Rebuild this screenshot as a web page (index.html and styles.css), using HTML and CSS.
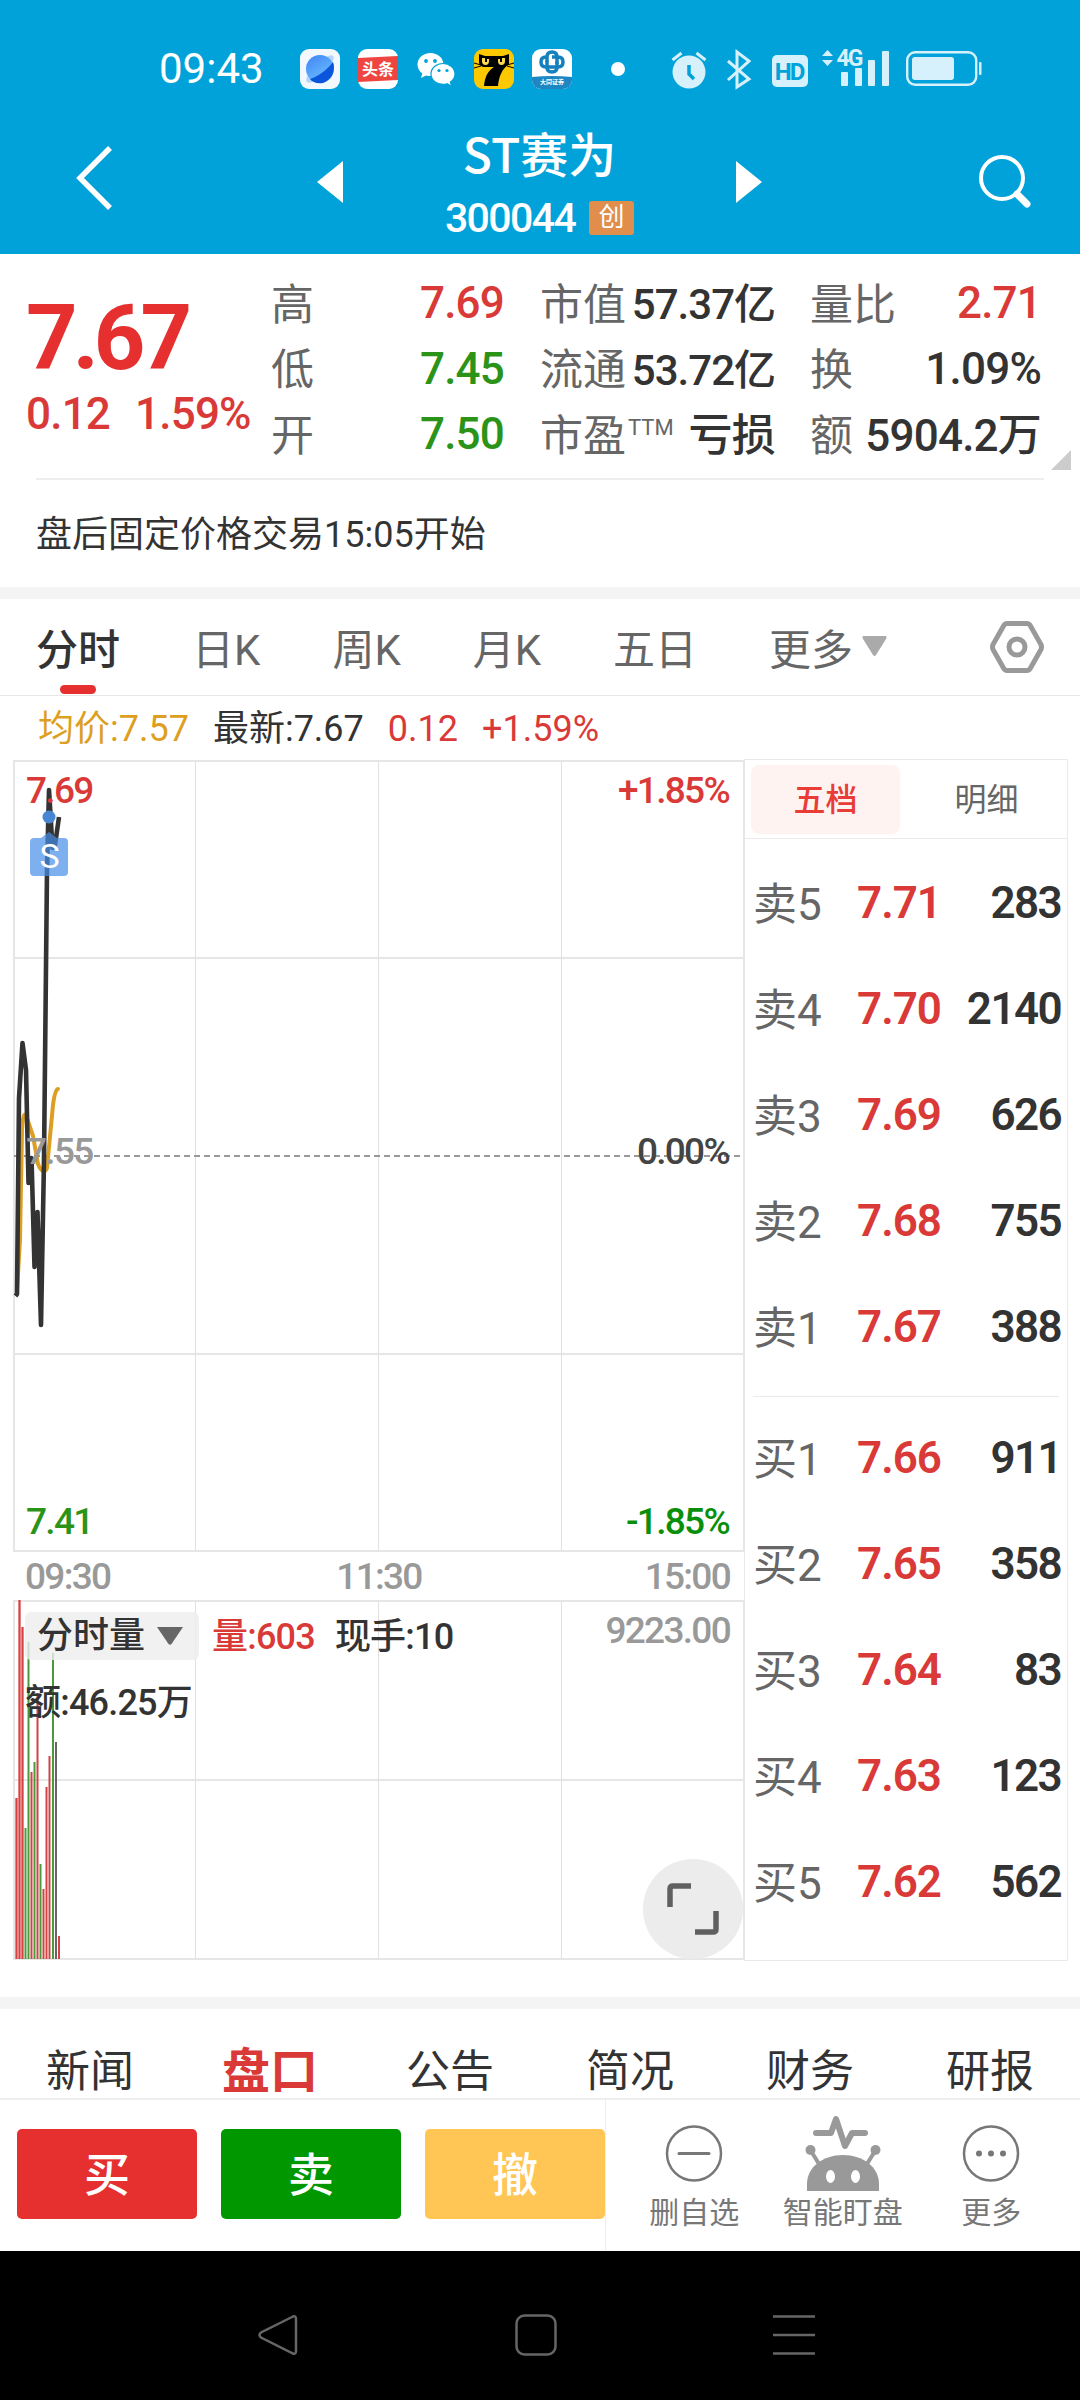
FILE: index.html
```html
<!DOCTYPE html>
<html lang="zh-CN">
<head>
    <meta charset="UTF-8">
    <meta name="viewport" content="width=device-width, initial-scale=1.0">
    <title>ST赛为 300044</title>
    <link rel="stylesheet" href="styles.css">
</head>
<body>

    <!-- 顶部 -->
    <header class="top">
        <div class="status-bar">
            <span class="clock">09:43</span>
            <svg class="status-icons" width="800" height="60" viewBox="280 40 800 60">
                <defs>
                    <linearGradient id="planet" x1="0" y1="0" x2="0.6" y2="1">
                        <stop offset="0" stop-color="#3f83f6"/>
                        <stop offset="1" stop-color="#6cc0ff"/>
                    </linearGradient>
                </defs>
                <!-- 浏览器 -->
                <rect x="300" y="49" width="40" height="40" rx="9" fill="#f3f8fe"/>
                <ellipse cx="320" cy="69" rx="18.500" ry="6" transform="rotate(-45 320 69)" fill="#b5d6fb"/>
                <circle cx="320" cy="69" r="14" fill="url(#planet)"/>
                <path d="M310 79C319 76 329 68 333 62C336 70 332 80 323 83C317 84 312 82 310 79z" fill="#0b55dc"/>
                <!-- 头条 -->
                <rect x="358" y="49" width="40" height="40" rx="9" fill="#fff"/>
                <path d="M358 58L398 56V80L358 82z" fill="#ef4540"/>
                <text class="toutiao" x="378" y="75">头条</text>
                <!-- 微信 -->
                <path d="M430.500 53c-7.300 0-13 5-13 11.500 0 3.700 1.900 6.800 4.800 8.900l-1.300 4.600 5-2.600c1.600.4 3 .6 4.500.6 7.300 0 13-5.200 13-11.500S437.800 53 430.500 53z" fill="#fff"/>
                <path d="M443 63.500c-6.600 0-12 4.400-12 10.400s5.400 10.400 12 10.400c1.500 0 2.800-.2 4-.6l4.600 2.500-1.200-4.200c2.800-2 4.600-4.800 4.600-8.100 0-6-5.400-10.400-12-10.400z" fill="#fff" stroke="#01a2d9" stroke-width="1.200"/>
                <g fill="#01a2d9"><circle cx="426" cy="61" r="1.900"/><circle cx="435" cy="61" r="1.900"/><circle cx="439" cy="70.500" r="1.600"/><circle cx="447" cy="70.500" r="1.600"/></g>
                <!-- 七猫 -->
                <rect x="474" y="49" width="40" height="40" rx="9" fill="#fcc800"/>
                <path d="M479 54l6 2h18l6-2v10c-7 5-10 12-11 22h-14c1-10 4-15 10-19h-11c-3-1-4-3-4-5z" fill="#000"/>
                <path d="M482 58v3q0 4 3.500 4t3.500-4v-2h-2v3h-2v-4zM498 59v2q0 4 3.500 4t3.500-4v-3l-3 0v4h-2v-3z" fill="#fcd94a"/>
                <path d="M474 63l7 2M474 68l7-2M514 63l-7 2M514 68l-7-2" stroke="#000" stroke-width="1"/>
                <!-- 大同证券 -->
                <rect x="532" y="49" width="40" height="40" rx="9" fill="#fff"/>
                <path d="M532 77q20-2 40 0v3a9 9 0 0 1-9 9h-22a9 9 0 0 1-9-9z" fill="#1f86c4"/>
                <g fill="none" stroke="#1480bd" stroke-width="3.500">
                    <path d="M547 62v-5q0-5 5-5t5 5v7"/>
                    <path d="M552 57h6q5 0 5 5t-5 5h-6"/>
                    <path d="M557 62v5q0 5-5 5t-5-5v-6"/>
                    <path d="M552 67h-6q-5 0-5-5t5-5h2"/>
                </g>
                <text class="broker" x="552" y="84">大同证券</text>
                <circle cx="618" cy="69" r="7" fill="#fff"/>
                <!-- 闹钟 -->
                <g fill="#d6f1fb" stroke="#d6f1fb">
                    <circle cx="689" cy="72" r="16.500" stroke="none"/>
                    <path d="M672.500 60l9-7M705.500 60l-9-7" stroke-width="3"/>
                    <path d="M689 65v9l5 5" fill="none" stroke="#01a2d9" stroke-width="3.500"/>
                </g>
                <path d="M728 61l21 18-12 8V52l12 9-21 19" fill="none" stroke="#d6f1fb" stroke-width="3"/>
                <rect x="772" y="55" width="36" height="32" rx="5" fill="#d6f1fb"/>
                <text class="hd" x="789" y="80">HD</text>
                <g fill="#d6f1fb">
                    <path d="M822 56l5.500-6 5.500 6zM822 60h11l-5.500 6z"/>
                    <text class="net" x="836.500" y="66">4G</text>
                    <rect x="841" y="72" width="7" height="14" rx="1"/>
                    <rect x="855" y="68" width="7" height="18" rx="1"/>
                    <rect x="868" y="60" width="7" height="26" rx="1"/>
                    <rect x="882" y="51" width="7" height="35" rx="1"/>
                    <rect x="912" y="57" width="42" height="23" rx="3"/>
                    <rect x="979" y="62" width="2.500" height="13" rx="1"/>
                </g>
                <rect x="907.200" y="52.200" width="69" height="32.600" rx="8" fill="none" stroke="#d6f1fb" stroke-width="2.400"/>
            </svg>
        </div>
        <div class="title-bar">
            <svg class="back" width="40" height="68" viewBox="0 0 40 68"><path d="M36 4L6 34L36 64" fill="none" stroke="#fff" stroke-width="5.500"/></svg>
            <svg class="prev" width="26" height="42" viewBox="0 0 26 42"><path d="M26 0V42L0 21z" fill="#fff"/></svg>
            <div class="stock">
                <h1>ST赛为</h1>
                <p><span class="code">300044</span><span class="board">创</span></p>
            </div>
            <svg class="next" width="26" height="42" viewBox="0 0 26 42"><path d="M0 0V42L26 21z" fill="#fff"/></svg>
            <svg class="search" width="56" height="58" viewBox="0 0 56 58"><circle cx="25" cy="25" r="21" fill="none" stroke="#fff" stroke-width="4"/><path d="M40 41L50 51" stroke="#fff" stroke-width="7" stroke-linecap="round"/></svg>
        </div>
    </header>

    <!-- 行情 -->
    <section class="quote">
        <div class="price">
            <strong>7.67</strong>
            <p><span>0.12</span><span>1.59%</span></p>
        </div>
        <dl class="col col-a">
            <div><dt>高</dt><dd class="up">7.69</dd></div>
            <div><dt>低</dt><dd class="down">7.45</dd></div>
            <div><dt>开</dt><dd class="down">7.50</dd></div>
        </dl>
        <dl class="col col-b">
            <div><dt>市值</dt><dd class="cn tight">57.37亿</dd></div>
            <div><dt>流通</dt><dd class="cn tight">53.72亿</dd></div>
            <div><dt>市盈<sup>TTM</sup></dt><dd class="cn">亏损</dd></div>
        </dl>
        <dl class="col col-c">
            <div><dt>量比</dt><dd class="up">2.71</dd></div>
            <div><dt>换</dt><dd>1.09%</dd></div>
            <div><dt>额</dt><dd class="cn">5904.2万</dd></div>
        </dl>
        <svg class="corner" width="20" height="20" viewBox="0 0 20 20"><path d="M20 0V20H0z" fill="#ccc"/></svg>
    </section>
    <p class="notice">盘后固定价格交易15:05开始</p>

    <!-- 周期 -->
    <nav class="periods">
        <span class="period active">分时</span>
        <span class="period">日K</span>
        <span class="period">周K</span>
        <span class="period">月K</span>
        <span class="period">五日</span>
        <span class="period">更多<svg width="25" height="20" viewBox="0 0 25 20"><path d="M1 0H24Q25 1 24 3L14 19Q12.500 21 11 19L1 3Q0 1 1 0z" fill="#aaa"/></svg></span>
        <svg class="setting" width="54" height="52" viewBox="0 0 54 52"><path d="M17 2.500H37Q39 2.500 40.500 5L51 23.500Q52 26 51 28.500L40.500 47Q39 49.500 37 49.500H17Q15 49.500 13.500 47L3 28.500Q2 26 3 23.500L13.500 5Q15 2.500 17 2.500z" fill="none" stroke="#999" stroke-width="5"/><circle cx="27" cy="26" r="8" fill="none" stroke="#999" stroke-width="5"/></svg>
    </nav>
    <div class="summary">
        <span class="avg">均价:7.57</span>
        <span>最新:7.67</span>
        <span class="up">0.12</span>
        <span class="up">+1.59%</span>
    </div>

    <main class="board-area">
        <div class="charts">
            <svg class="chart" width="732" height="1202" viewBox="13 760 732 1202">
                <g fill="none" stroke="#e6e6e6" stroke-width="2">
                    <path d="M14 761H744V1551H14zM14 958H744M14 1354H744"/>
                    <path d="M14 1601H744V1959H14zM14 1780H744"/>
                </g>
                <path d="M195.500 761V1551M378.500 761V1551M561.500 761V1551M195.500 1601V1959M378.500 1601V1959M561.500 1601V1959" stroke="#e0e0e0" stroke-width="1"/>
                <path d="M14 1156H744" stroke="#999" stroke-width="2" stroke-dasharray="6 4"/>

                <!-- 成交量 -->
                <path d="M15 1959V1798H18V1600H21V1627H24V1959z" fill="#f66" opacity="0.400"/>
                <g stroke="#d24444" stroke-width="2">
                    <path d="M16.500 1959V1798M19.500 1959V1600M22.500 1959V1627M31.500 1959V1772M37.500 1959V1693M43.500 1959V1889M46.500 1959V1787M49.500 1959V1756M59 1959V1936"/>
                </g>
                <g stroke="#4a9a3c" stroke-width="2">
                    <path d="M25.500 1959V1828M28.500 1959V1642M34.500 1959V1762M40.500 1959V1864M53 1959V1653"/>
                </g>
                <path d="M56 1959V1742" stroke="#666" stroke-width="2"/>

                <!-- 均价与价格 -->
                <path d="M17 1290L20 1240L22 1130Q23 1112 26 1115L33 1136L38 1164Q43 1176 47 1168L53 1105Q55 1089 58 1089" fill="none" stroke="#dd9f22" stroke-width="4" stroke-linecap="round"/>
                <path d="M15.500 1296L17 1294L19 1098L22.500 1043L26 1070L28.500 1183L31.500 1158L34.500 1267L37.500 1212L41 1325L44 1160L47 870L49 790L52.500 848L55 845L59 817" fill="none" stroke="#333" stroke-width="4.600" stroke-linejoin="round"/>

                <g class="axis">
                    <text x="26" y="803" class="up-fill">7.69</text>
                    <text x="26" y="1164" class="grey">7.55</text>
                    <text x="26" y="1534" class="down-fill">7.41</text>
                    <text x="729" y="803" class="up-fill end">+1.85%</text>
                    <text x="729" y="1164" class="end">0.00%</text>
                    <text x="729" y="1534" class="green end">-1.85%</text>
                    <text x="25" y="1589" class="grey">09:30</text>
                    <text x="379" y="1589" class="grey mid">11:30</text>
                    <text x="730" y="1589" class="grey end">15:00</text>
                    <text x="730" y="1643" class="grey end">9223.00</text>
                </g>

                <!-- 卖出标记 -->
                <circle cx="49" cy="817" r="6.500" fill="#4786d2"/>
                <path d="M41 838L49 832L57 838H64Q68 838 68 842V872Q68 876 64 876H34Q30 876 30 872V842Q30 838 34 838z" fill="#478eea" opacity="0.700"/>
                <text x="49.500" y="868" class="mark">S</text>
            </svg>
            <div class="volume-info">
                <span class="picker">分时量<svg width="26" height="18" viewBox="0 0 26 18"><path d="M0 0H26L14.500 17Q13 18.500 11.500 17z" fill="#666"/></svg></span>
                <span class="up">量:603</span>
                <span>现手:10</span>
                <span class="amount">额:46.25万</span>
            </div>
            <svg class="expand" width="100" height="100" viewBox="0 0 100 100"><circle cx="50" cy="50" r="50" fill="#ececec"/><path d="M27 48V30Q27 27 30 27H48M73 52V70Q73 73 70 73H52" fill="none" stroke="#606060" stroke-width="5.500"/></svg>
        </div>

        <!-- 五档 -->
        <aside class="book">
            <div class="book-tabs"><span class="on">五档</span><span>明细</span></div>
            <ul>
                <li><i>卖5</i><b>7.71</b><em>283</em></li>
                <li><i>卖4</i><b>7.70</b><em>2140</em></li>
                <li><i>卖3</i><b>7.69</b><em>626</em></li>
                <li><i>卖2</i><b>7.68</b><em>755</em></li>
                <li><i>卖1</i><b>7.67</b><em>388</em></li>
            </ul>
            <ul class="buy">
                <li><i>买1</i><b>7.66</b><em>911</em></li>
                <li><i>买2</i><b>7.65</b><em>358</em></li>
                <li><i>买3</i><b>7.64</b><em>83</em></li>
                <li><i>买4</i><b>7.63</b><em>123</em></li>
                <li><i>买5</i><b>7.62</b><em>562</em></li>
            </ul>
        </aside>
    </main>

    <nav class="info-tabs">
        <span>新闻</span>
        <span class="active">盘口</span>
        <span>公告</span>
        <span>简况</span>
        <span>财务</span>
        <span>研报</span>
    </nav>

    <!-- 底部操作 -->
    <div class="actions">
        <div class="trade">
            <button class="btn-buy">买</button>
            <button class="btn-sell">卖</button>
            <button class="btn-cancel">撤</button>
        </div>
        <div class="tools">
            <div class="tool">
                <svg width="80" height="80" viewBox="0 0 80 80"><circle cx="40" cy="41.500" r="27" fill="none" stroke="#777" stroke-width="2.500"/><path d="M25 41.500H55" stroke="#777" stroke-width="3" stroke-linecap="round"/></svg>
                <span>删自选</span>
            </div>
            <div class="tool">
                <svg width="80" height="80" viewBox="0 0 80 80"><g fill="none" stroke="#999" stroke-linecap="round" stroke-linejoin="round"><path d="M13 21H28L33 7L42 34L49 21H62" stroke-width="6"/><path d="M8 39L16 52M72 39L64 52" stroke-width="4"/></g><circle cx="7.500" cy="38" r="5" fill="#999"/><circle cx="72.500" cy="38" r="5" fill="#999"/><path d="M4 79V72C4 55 20 43 40 43S76 55 76 72V79z" fill="#999"/><ellipse cx="27.500" cy="64.500" rx="4.500" ry="6.500" fill="#fff"/><ellipse cx="52.500" cy="64.500" rx="4.500" ry="6.500" fill="#fff"/></svg>
                <span>智能盯盘</span>
            </div>
            <div class="tool">
                <svg width="80" height="80" viewBox="0 0 80 80"><circle cx="40" cy="41.500" r="27" fill="none" stroke="#777" stroke-width="2.500"/><g fill="#777"><circle cx="28" cy="41.500" r="3"/><circle cx="40" cy="41.500" r="3"/><circle cx="52" cy="41.500" r="3"/></g></svg>
                <span>更多</span>
            </div>
        </div>
    </div>

    <!-- 系统导航 -->
    <footer class="sys-nav">
        <svg width="42" height="42" viewBox="0 0 42 42"><path d="M36 2.500L4 18.500Q1 21 4 23.500L36 39.500Q39 40.500 39 37V5Q39 1.500 36 2.500z"/></svg>
        <svg width="42" height="42" viewBox="0 0 42 42"><rect x="1.500" y="1.500" width="39" height="39" rx="8"/></svg>
        <svg width="42" height="42" viewBox="0 0 42 42"><path d="M0 2.500H42M0 21H42M0 39.500H42"/></svg>
    </footer>

</body>
</html>
```

FILE: styles.css
```css
* {
    box-sizing: border-box;
    margin: 0;
    padding: 0;
}

body {
    width: 1080px;
    height: 2400px;
    overflow: hidden;
    background-color: #fff;
    color: #333;
    font-family: Roboto, "Noto Sans CJK SC", sans-serif;
}

svg {
    display: block;
    flex: none;
}

i, em {
    font-style: normal;
}

.up {
    color: #d93a38;
}

.down {
    color: #2c9319;
}

/* 顶部 */
.top {
    height: 254px;
    background-color: #01a2d9;
    color: #fff;
}

.status-bar {
    display: flex;
    height: 110px;
    padding: 40px 0 0 159px;
}

.clock {
    flex: none;
    width: 121px;
    font-size: 42px;
    line-height: 58px;
}

.status-icons text {
    font-weight: 700;
}

.toutiao {
    font-size: 16px;
    fill: #fff;
    text-anchor: middle;
}

.broker {
    font-size: 6px;
    fill: #fff;
    text-anchor: middle;
}

.hd {
    font-size: 24px;
    letter-spacing: -2px;
    fill: #01a2d9;
    text-anchor: middle;
}

.net {
    font-size: 23px;
    letter-spacing: -2px;
}

.title-bar {
    display: flex;
    height: 144px;
    padding-left: 74px;
}

.back {
    margin-top: 34px;
}

.prev {
    margin: 51px 0 0 203px;
}

.stock {
    width: 393px;
    text-align: center;
}

.stock h1 {
    height: 76px;
    padding-top: 8px;
    font-family: "Noto Sans CJK SC", sans-serif;
    font-size: 48px;
    font-weight: 500;
    line-height: 68px;
}

.stock p {
    display: flex;
    justify-content: center;
    align-items: center;
    height: 54px;
    margin-top: 5px;
    gap: 14px;
}

.code {
    font-size: 41px;
    font-weight: 500;
    letter-spacing: -1.6px;
    line-height: 54px;
}

.board {
    width: 45px;
    height: 34px;
    border-radius: 3px;
    background-color: #e18e4d;
    font-size: 26px;
    line-height: 33px;
}

.next {
    margin-top: 51px;
}

.search {
    margin: 43px 0 0 215px;
}

/* 行情 */
.quote {
    position: relative;
    display: flex;
    height: 226px;
    margin: 0 36px;
    border-bottom: 2px solid #eee;
}

.price {
    width: 235px;
    margin-left: -10px;
    padding-top: 36px;
    color: #e63030;
}

.price strong {
    display: block;
    font-size: 90px;
    font-weight: 700;
    line-height: 98px;
    letter-spacing: -5px;
}

.price p {
    display: flex;
    gap: 25px;
    font-size: 44px;
    font-weight: 500;
    line-height: 52px;
    letter-spacing: -0.8px;
    color: #d93a38;
}

.col {
    padding-top: 16px;
}

.col div {
    display: flex;
    justify-content: space-between;
    align-items: center;
    height: 65.5px;
    white-space: nowrap;
}

.col dt {
    padding-bottom: 4px;
    font-size: 43px;
    color: #666;
}

.col dd {
    padding-top: 1px;
    font-size: 44px;
    font-weight: 500;
    letter-spacing: -0.8px;
}

.col .cn {
    padding: 0 0 4px;
}

.col-a {
    width: 233px;
    margin-left: 10px;
}

.col-b {
    width: 235px;
    margin-left: 36px;
}

.col .tight {
    font-size: 42px;
    letter-spacing: -1px;
}

.col-b sup {
    margin-left: 2px;
    font-size: 22px;
    line-height: 0;
    vertical-align: 16px;
}

.col-c {
    width: 231px;
    margin-left: 35px;
}

.corner {
    position: absolute;
    right: -27px;
    bottom: 8px;
}

.notice {
    height: 107px;
    padding-left: 36px;
    font-size: 36px;
    line-height: 111px;
}

/* 周期 */
.periods {
    display: flex;
    align-items: center;
    height: 109px;
    border-top: 12px solid #f4f4f4;
    border-bottom: 1px solid #e6e6e6;
    padding-left: 36px;
    font-size: 42px;
    color: #666;
}

.period {
    position: relative;
    display: flex;
    align-items: center;
    gap: 9px;
    height: 96px;
    margin-right: 72px;
    padding-bottom: 2px;
    white-space: nowrap;
}

.periods .active {
    font-weight: 500;
    color: #333;
}

.periods .active::after {
    content: "";
    position: absolute;
    left: 24px;
    bottom: 1px;
    width: 36px;
    height: 9px;
    border-radius: 5px;
    background-color: #e63030;
}

.setting {
    margin-left: 31px;
}

.summary {
    display: flex;
    gap: 24px;
    height: 63px;
    padding-left: 38px;
    font-size: 36px;
    line-height: 67px;
}

.avg {
    color: #dd9f22;
}

/* 图表 */
.board-area {
    display: flex;
    height: 1238px;
    padding-left: 13px;
}

.charts {
    position: relative;
    width: 731px;
    padding-top: 1px;
}

.axis {
    font-size: 37px;
    font-weight: 500;
    letter-spacing: -1.7px;
    fill: #444;
}

.axis .grey {
    fill: #999;
}

.up-fill {
    fill: #d93a38;
}

.down-fill {
    fill: #2c9319;
}

.green {
    fill: #0a8f0a;
}

.end {
    text-anchor: end;
}

.mid {
    text-anchor: middle;
}

.mark {
    font-size: 34px;
    fill: #fff;
    text-anchor: middle;
}

.volume-info {
    position: absolute;
    left: 12px;
    top: 853px;
    display: flex;
    flex-wrap: wrap;
    column-gap: 20px;
    width: 560px;
    font-size: 36px;
    font-weight: 500;
    line-height: 51px;
    letter-spacing: -0.8px;
}

.volume-info .picker {
    display: flex;
    align-items: center;
    gap: 12px;
    width: 174px;
    height: 48px;
    margin-right: -7px;
    padding-left: 12px;
    border-radius: 6px;
    background-color: rgba(238, 238, 238, 0.8);
    letter-spacing: 0;
}

.volume-info .amount {
    width: 100%;
    margin-top: 15px;
}

.expand {
    position: absolute;
    left: 630px;
    top: 1100px;
}

/* 五档 */
.book {
    width: 324px;
    height: 1202px;
    border: 1px solid #eaeaea;
}

.book-tabs {
    display: flex;
    gap: 12px;
    height: 79px;
    padding: 5px 6px;
    border-bottom: 1px solid #eaeaea;
    font-size: 32px;
    color: #666;
}

.book-tabs span {
    flex: none;
    width: 149px;
    height: 69px;
    border-radius: 8px;
    text-align: center;
    line-height: 70px;
}

.book-tabs .on {
    background-color: #fff3f2;
    font-weight: 500;
    color: #e83c36;
}

.book ul {
    list-style: none;
    margin: 0 8px;
    padding-top: 11px;
    height: 557px;
}

.book .buy {
    border-top: 1px solid #eaeaea;
    padding-top: 8px;
}

.book li {
    display: flex;
    align-items: center;
    height: 106px;
    font-size: 44px;
    font-weight: 500;
    letter-spacing: -1px;
}

.book i {
    width: 104px;
    padding-bottom: 5px;
    font-weight: 400;
    letter-spacing: 0;
    color: #666;
}

.book b {
    font-weight: 600;
    color: #d93a38;
}

.book em {
    margin: 0 -2px 0 auto;
    font-weight: 600;
    letter-spacing: -1.6px;
}

/* 底部 */
.info-tabs {
    display: flex;
    height: 103px;
    border-top: 12px solid #f4f4f4;
    border-bottom: 2px solid #eee;
    font-size: 44px;
    line-height: 126px;
    overflow: hidden;
}

.info-tabs span {
    width: 180px;
    text-align: center;
}

.info-tabs .active {
    font-size: 48px;
    font-weight: 700;
    color: #d93a38;
}

.actions {
    display: flex;
    height: 151px;
    background-color: #fff;
}

.trade {
    display: flex;
    gap: 24px;
    width: 606px;
    padding: 29px 0 0 17px;
    border-right: 1px solid #eee;
}

.trade button {
    width: 180px;
    height: 90px;
    padding-top: 2px;
    border: none;
    border-radius: 5px;
    color: #fff;
    font-family: inherit;
    font-size: 46px;
    font-weight: 500;
    line-height: 88px;
}

.btn-buy {
    background-color: #e63030;
}

.btn-sell {
    background-color: #009700;
}

.btn-cancel {
    background-color: #ffc656;
}

.tools {
    display: flex;
    padding-left: 14px;
}

.tool {
    display: flex;
    flex-direction: column;
    align-items: center;
    width: 148.5px;
    padding-top: 12px;
    font-size: 30px;
    line-height: 42px;
    color: #777;
}

.sys-nav {
    display: flex;
    gap: 216px;
    height: 149px;
    padding: 63px 0 0 257px;
    background-color: #000;
}

.sys-nav svg {
    fill: none;
    stroke: #666;
    stroke-width: 2.5;
}
```
